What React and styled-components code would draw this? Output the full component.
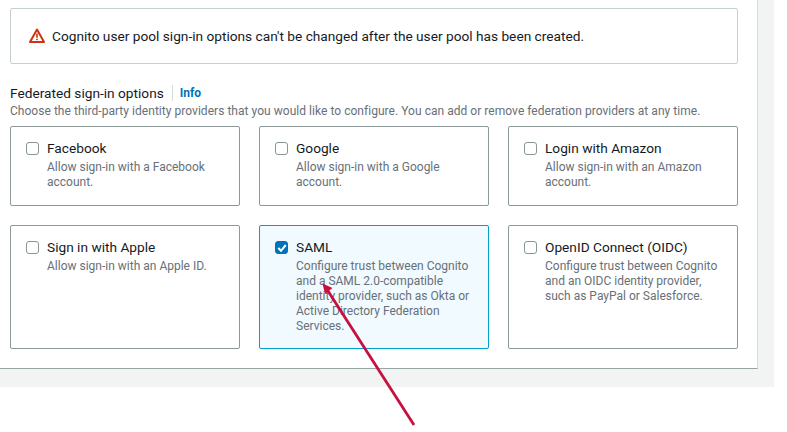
import React from 'react';
import styled, { createGlobalStyle } from 'styled-components';

const Global = createGlobalStyle`
  html, body { margin: 0; background: #fff; }
  body { font-family: Roboto, "Noto Sans", sans-serif; }
`;
const Page = styled.div`
  position: relative;
  width: 787px;
  height: 432px;
  overflow: hidden;
  background: #fff;
`;
const Backdrop = styled.div`
  width: 774px;
  height: 387px;
  box-sizing: border-box;
  background: #f2f3f3;
  padding-right: 16px;
  padding-bottom: 18px;
`;
const Panel = styled.div`
  box-sizing: border-box;
  height: 100%;
  background: #fff;
  border-right: 1px solid #d5dbdb;
  border-bottom: 1px solid #95a5a6;
  padding: 8px 19px 0 10px;
`;
const Alert = styled.div`
  box-sizing: border-box;
  height: 56px;
  display: flex;
  align-items: center;
  gap: 7px;
  padding-left: 18px;
  border: 1px solid #c6d0d0;
  border-radius: 2px;
  font-size: 13.7px;
  color: #16191f;
`;
const AlertIcon = styled.svg`
  flex: none;
  margin-top: -2px;
`;
const HeadingRow = styled.div`
  display: flex;
  align-items: center;
  margin-top: 20px;
  height: 18px;
`;
const Heading = styled.span`
  font-size: 13.7px;
  color: #16191f;
`;
const InfoLink = styled.a`
  margin-left: 8px;
  padding-left: 7px;
  border-left: 1px solid #d5dbdb;
  font-size: 12px;
  line-height: 16px;
  font-weight: 700;
  color: #0073bb;
`;
const Hint = styled.p`
  margin: 1px 0 0;
  font-size: 12px;
  line-height: 16px;
  letter-spacing: 0.037px;
  color: #687078;
  white-space: nowrap;
`;
const Grid = styled.div`
  display: grid;
  grid-template-columns: repeat(3, 230px);
  grid-template-rows: 80px 124px;
  gap: 19px;
  margin-top: 7px;
`;
const Card = styled.div`
  box-sizing: border-box;
  display: flex;
  gap: 8px;
  padding: 12px 15px;
  border: 1px solid ${p => (p.$on ? '#00a1c9' : '#8d9999')};
  border-radius: 2px;
  background: ${p => (p.$on ? '#f1faff' : '#fff')};
`;
const Box = styled.span`
  box-sizing: border-box;
  flex: none;
  width: 13px;
  height: 13px;
  margin-top: 3px;
  display: flex;
  align-items: center;
  justify-content: center;
  border-radius: 3px;
  border: 1px solid ${p => (p.$on ? '#0073bb' : '#879596')};
  background: ${p => (p.$on ? '#0073bb' : '#fff')};
`;
const CardBody = styled.div`
  display: flex;
  flex-direction: column;
`;
const Title = styled.span`
  font-size: 13.7px;
  line-height: 18px;
  color: #16191f;
`;
const Desc = styled.span`
  margin-top: 3px;
  font-size: 12px;
  line-height: 15px;
  color: #687078;
`;
const Arrow = styled.svg`
  position: absolute;
  left: 0;
  top: 0;
  pointer-events: none;
`;

const options = [
  ['Facebook', 'Allow sign-in with a Facebook account.'],
  ['Google', 'Allow sign-in with a Google account.'],
  ['Login with Amazon', 'Allow sign-in with an Amazon account.'],
  ['Sign in with Apple', 'Allow sign-in with an Apple ID.'],
  ['SAML', 'Configure trust between Cognito and a SAML 2.0-compatible identity provider, such as Okta or Active Directory Federation Services.', true],
  ['OpenID Connect (OIDC)', 'Configure trust between Cognito and an OIDC identity provider, such as PayPal or Salesforce.'],
];

export default function App() {
  return (
    <Page>
      <Global />
      <Backdrop>
        <Panel>
          <Alert>
            <AlertIcon width="16" height="15" viewBox="0 0 16 15">
              <path d="M8 1.5 L15 14 H1 Z" fill="none" stroke="#d13212" strokeWidth="2" strokeLinejoin="round" />
              <rect x="7.2" y="5.5" width="1.6" height="4.2" fill="#d13212" />
              <rect x="7.2" y="10.6" width="1.6" height="1.6" fill="#d13212" />
            </AlertIcon>
            Cognito user pool sign-in options can't be changed after the user pool has been created.
          </Alert>
          <HeadingRow>
            <Heading>Federated sign-in options</Heading>
            <InfoLink>Info</InfoLink>
          </HeadingRow>
          <Hint>Choose the third-party identity providers that you would like to configure. You can add or remove federation providers at any time.</Hint>
          <Grid>
            {options.map(([t, d, on]) => (
              <Card key={t} $on={on}>
                <Box $on={on}>
                  {on && (
                    <svg width="10" height="10" viewBox="0 0 10 10">
                      <path d="M1.2 5 L4 7.8 L8.8 2" fill="none" stroke="#fff" strokeWidth="2" />
                    </svg>
                  )}
                </Box>
                <CardBody>
                  <Title>{t}</Title>
                  <Desc>{d}</Desc>
                </CardBody>
              </Card>
            ))}
          </Grid>
        </Panel>
      </Backdrop>
      <Arrow width="787" height="432" viewBox="0 0 787 432">
        <line x1="414" y1="425" x2="328" y2="291" stroke="#c7103f" strokeWidth="2.8" />
        <path d="M322.5 283.5 L332.5 288 L325 294 Z" fill="#c7103f" />
      </Arrow>
    </Page>
  );
}
